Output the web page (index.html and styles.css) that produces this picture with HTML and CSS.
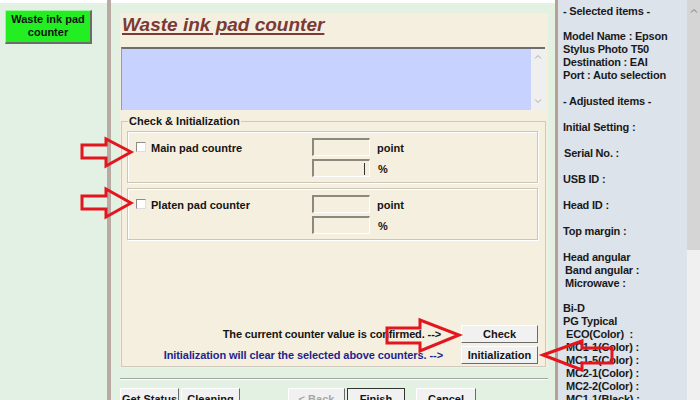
FILE: index.html
```html
<!DOCTYPE html>
<html>
<head>
<meta charset="utf-8">
<link rel="stylesheet" href="styles.css">
</head>
<body>
<div class="app">
  <div class="left">
    <div class="green-btn">Waste ink pad<br>counter</div>
  </div>
  <div class="sep"></div>
  <div class="main">
    <div class="panel">
      <div class="title">Waste ink pad counter</div>
      <div class="memo">
        <div class="memo-body"></div>
        <div class="memo-scroll">
          <svg width="8" height="5" viewBox="0 0 8 5"><path d="M1 4.5 L4 1.5 L7 4.5" fill="none" stroke="#a8a8a8" stroke-width="1"/></svg>
          <svg width="8" height="5" viewBox="0 0 8 5"><path d="M1 0.5 L4 3.5 L7 0.5" fill="none" stroke="#a8a8a8" stroke-width="1"/></svg>
        </div>
      </div>
      <div class="group">
        <span class="legend">Check &amp; Initialization</span>
        <div class="sub">
          <span class="cb"></span><span class="lbl">Main pad countre</span><span class="field"></span><span class="unit">point</span>
          <span></span><span></span><span class="field caret"><i></i></span><span class="unit pct">%</span>
        </div>
        <div class="sub">
          <span class="cb"></span><span class="lbl">Platen pad counter</span><span class="field"></span><span class="unit">point</span>
          <span></span><span></span><span class="field"></span><span class="unit pct">%</span>
        </div>
        <div class="actions">
          <div class="msg">The current counter value is confirmed. --&gt;</div>
          <button class="btn">Check</button>
          <div class="msg blue">Initialization will clear the selected above counters. --&gt;</div>
          <button class="btn">Initialization</button>
        </div>
      </div>
    </div>
    <div class="rule"></div>
    <div class="footer">
      <button class="fbtn w59">Get Status</button>
      <button class="fbtn w59 ml2">Cleaning</button>
      <button class="fbtn w57 back">&lt; Back</button>
      <button class="fbtn w58 ml2 default">Finish</button>
      <button class="fbtn w60 cancel">Cancel</button>
    </div>
  </div>
  <div class="sep2"></div>
  <div class="right">
    <div class="info">
      <div class="ln">- Selected items -</div>
      <div class="ln">&nbsp;</div>
      <div class="ln">Model Name : Epson</div>
      <div class="ln">Stylus Photo T50</div>
      <div class="ln">Destination : EAI</div>
      <div class="ln">Port : Auto selection</div>
      <div class="ln">&nbsp;</div>
      <div class="ln">- Adjusted items -</div>
      <div class="ln">&nbsp;</div>
      <div class="ln">Initial Setting :</div>
      <div class="ln">&nbsp;</div>
      <div class="ln in1">Serial No. :</div>
      <div class="ln">&nbsp;</div>
      <div class="ln">USB ID :</div>
      <div class="ln">&nbsp;</div>
      <div class="ln">Head ID :</div>
      <div class="ln">&nbsp;</div>
      <div class="ln">Top margin :</div>
      <div class="ln">&nbsp;</div>
      <div class="ln">Head angular</div>
      <div class="ln in2">Band angular :</div>
      <div class="ln in2">Microwave :</div>
      <div class="ln">&nbsp;</div>
      <div class="ln">Bi-D</div>
      <div class="ln">PG Typical</div>
      <div class="ln in3">ECO(Color)&nbsp; :</div>
      <div class="ln in3">MC1-1(Color) :</div>
      <div class="ln in3">MC1-5(Color) :</div>
      <div class="ln in3">MC2-1(Color) :</div>
      <div class="ln in3">MC2-2(Color) :</div>
      <div class="ln in3">MC1-1(Black) :</div>
    </div>
    <div class="vscroll">
      <svg width="8" height="5" viewBox="0 0 8 5"><path d="M1 4.5 L4 1.5 L7 4.5" fill="none" stroke="#777" stroke-width="1"/></svg>
    </div>
  </div>
</div>
<svg class="arrows" width="700" height="400" viewBox="0 0 700 400">
  <g fill="none" stroke="#e3161f" stroke-width="3" stroke-linejoin="miter">
    <polygon points="82,145 106,145 106,139 131,152 106,166 106,158 82,158"/>
    <polygon points="82,196 106,196 106,189 131,203 106,217 106,209 82,209"/>
    <polygon points="387,328 420,328 420,320 459,335 420,351 420,343 387,343"/>
    <polygon points="543,355 582,341 582,348 612,348 612,363 582,363 582,370"/>
  </g>
</svg>
</body>
</html>
```

FILE: styles.css
```css
html, body {
  margin: 0;
  padding: 0;
}
body {
  width: 700px;
  height: 400px;
  overflow: hidden;
  position: relative;
  background: #ffffff;
  font-family: "Liberation Sans", Arial, sans-serif;
  color: #141414;
}
.app {
  display: flex;
  height: 400px;
  overflow: hidden;
}
.left {
  width: 107px;
  box-sizing: border-box;
  background: #e2f1e3;
  border-top: 3px solid #fff;
  padding: 7px 0 0 5px;
}
.green-btn {
  width: 87px;
  height: 34px;
  box-sizing: border-box;
  background: #22ee22;
  border-top: 1px solid #9ef59e;
  border-left: 1px solid #9ef59e;
  border-right: 2px solid #6c6c6c;
  border-bottom: 2px solid #6c6c6c;
  text-align: center;
  font-weight: bold;
  font-size: 11px;
  line-height: 13px;
  padding-top: 2px;
  color: #121212;
}
.sep {
  width: 4px;
  background: #b7aba3;
}
.main {
  width: 444px;
  box-sizing: border-box;
  background: #e3f1e3;
  border-top: 3px solid #fff;
  padding: 10px 0 0 9px;
  display: flex;
  flex-direction: column;
  overflow: hidden;
}
.panel {
  flex-shrink: 0;
  width: 428px;
  height: 355px;
  background: #f4efdf;
  display: flex;
  flex-direction: column;
}
.title {
  flex-shrink: 0;
  height: 34px;
  box-sizing: border-box;
  padding: 1.5px 0 0 2px;
  font-size: 19px;
  line-height: 20px;
  font-weight: bold;
  font-style: italic;
  color: #7b3a35;
  text-decoration: underline;
  text-decoration-thickness: 2px;
  text-underline-offset: 2px;
}
.memo {
  flex-shrink: 0;
  margin-left: 1px;
  width: 424px;
  height: 63px;
  box-sizing: border-box;
  border-top: 2px solid #6e6e6e;
  border-left: 1px solid #9a9a9a;
  display: flex;
}
.memo-body {
  flex: 1;
  background: #c8d2fe;
}
.memo-scroll {
  width: 14px;
  background: #efefef;
  display: flex;
  flex-direction: column;
  justify-content: space-between;
  align-items: center;
  padding: 5px 0 6px;
  box-sizing: border-box;
}
.group {
  margin: 11px 0 1px 1px;
  width: 425px;
  box-sizing: border-box;
  flex: 1;
  border: 1px solid #cfcabd;
  padding: 0 7px 2px 5px;
  display: flex;
  flex-direction: column;
}
.legend {
  align-self: flex-start;
  margin: -7.5px 0 0 1px;
  padding: 0 1px;
  background: #f4efdf;
  font-size: 11px;
  font-weight: bold;
  line-height: 13px;
  color: #141414;
}
.sub {
  margin-top: 3.5px;
  border: 1px solid #cbc6b8;
  box-shadow: 1px 1px 0 #ffffff, inset 1px 1px 0 #ffffff;
  padding: 6px 0 5px 8px;
  display: grid;
  grid-template-columns: 15px 161px 65px auto;
  row-gap: 3px;
  align-items: center;
  font-size: 11px;
  font-weight: bold;
  line-height: 14px;
}
.sub + .sub {
  margin-top: 5px;
}
.lbl, .unit {
  padding-top: 1px;
}
.cb {
  width: 10px;
  height: 10px;
  box-sizing: border-box;
  background: #ffffff;
  border: 1px solid;
  border-color: #8c8c8c #dedede #dedede #8c8c8c;
  margin-top: -1px;
}
.field {
  width: 58px;
  height: 18px;
  box-sizing: border-box;
  border-top: 2px solid #8b887e;
  border-left: 2px solid #8b887e;
  border-right: 1px solid #ffffff;
  border-bottom: 1px solid #ffffff;
  background: #f4efdf;
}
.caret {
  display: flex;
  justify-content: flex-end;
  align-items: center;
  padding-right: 4px;
}
.caret i {
  display: block;
  width: 1px;
  height: 12px;
  background: #333;
}
.unit.pct {
  padding-left: 1px;
}
.actions {
  margin-top: auto;
  display: grid;
  grid-template-columns: 1fr 77px;
  row-gap: 3px;
  align-items: center;
  font-size: 11px;
  font-weight: bold;
}
.msg {
  text-align: right;
  padding-right: 20px;
  white-space: nowrap;
  letter-spacing: -0.12px;
}
.msg.blue {
  color: #1f1f8c;
  padding-right: 18px;
  letter-spacing: -0.08px;
}
.btn {
  height: 18px;
  margin: 0;
  padding: 0;
  background: #f1f1f1;
  border: 1px solid;
  border-color: #ffffff #6a6a6a #6a6a6a #ffffff;
  font-family: "Liberation Sans", Arial, sans-serif;
  font-size: 11px;
  font-weight: bold;
  color: #141414;
}
.rule {
  flex-shrink: 0;
  margin-top: 10px;
  width: 428px;
  height: 2px;
  box-sizing: border-box;
  border-top: 1px solid #a4a4a4;
  border-bottom: 1px solid #ffffff;
}
.footer {
  flex-shrink: 0;
  margin-top: 8px;
  display: flex;
}
.fbtn {
  flex-shrink: 0;
  height: 23px;
  margin: 0;
  padding: 0 0 2px;
  background: #f1f1f1;
  border: 1px solid;
  border-color: #ffffff #6a6a6a #6a6a6a #ffffff;
  font-family: "Liberation Sans", Arial, sans-serif;
  font-size: 11px;
  font-weight: bold;
  color: #141414;
}
.w57 { width: 57px; }
.w58 { width: 58px; }
.w59 { width: 59px; }
.w60 { width: 60px; }
.ml2 { margin-left: 2px; }
.back {
  margin-left: 48px;
  color: #a6a6a6;
}
.default {
  border: 1px solid #333;
}
.cancel {
  margin-left: 11px;
}
.sep2 {
  width: 3px;
  background: #b6a193;
}
.right {
  flex: 1;
  display: flex;
}
.info {
  width: 129px;
  box-sizing: border-box;
  background: #dde3eb;
  padding: 4.5px 0 0 5px;
  font-size: 11px;
  font-weight: bold;
  line-height: 12.95px;
  letter-spacing: -0.2px;
  color: #1a1a1a;
  white-space: nowrap;
}
.in1 { padding-left: 1px; }
.in2 { padding-left: 2px; }
.in3 { padding-left: 3px; }
.vscroll {
  flex: 1;
  background: linear-gradient(#d5d5d5 0, #d5d5d5 250px, #f0f0f0 250px);
  display: flex;
  justify-content: center;
  padding-top: 8px;
  box-sizing: border-box;
  align-items: flex-start;
}
.arrows {
  position: absolute;
  top: 0;
  left: 0;
  pointer-events: none;
}
```
